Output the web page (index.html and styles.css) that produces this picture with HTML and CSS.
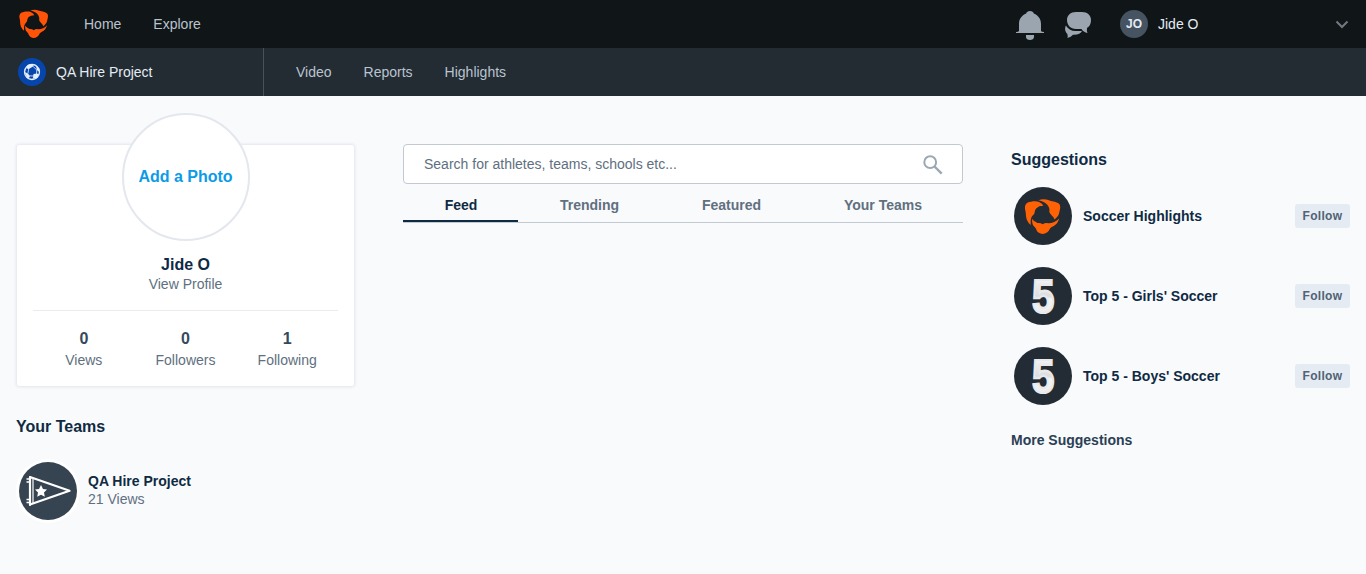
FILE: index.html
```html
<!DOCTYPE html>
<html lang="en">
<head>
<meta charset="utf-8">
<title>Home</title>
<link rel="stylesheet" href="styles.css">
</head>
<body>
<svg class="defs" width="0" height="0" aria-hidden="true">
  <defs>
    <linearGradient id="silver" x1="0" y1="0" x2="0" y2="1"><stop offset="0" stop-color="#fff"/><stop offset=".5" stop-color="#dcdde0"/><stop offset=".55" stop-color="#f4f4f5"/><stop offset="1" stop-color="#e8e8ea"/></linearGradient>
    <symbol id="logo" viewBox="74 175 112 110">
      <path d="M118 185C108 181 92 184 84 187C76 191 74 200 76 209C79 218 77 228 81 239Q85 249 93 255C92 241 93 231 100 225C107 220 103 211 110 204Q117 197 131 197Q129 190 118 185Z"/>
      <path d="M116 180Q132 174 150 181C160 185 172 184 180 192C185 201 180 211 179 219C177 228 172 232 165 238C162 229 151 223 149 215C153 200 140 185 116 180Z"/>
      <path d="M97 236C101 244 107 244 113 249Q123 248 129 253Q138 247 146 250C159 250 170 244 179 235C174 250 168 256 158 260C149 264 151 271 142 278Q129 287 116 278C109 272 111 266 104 260C97 255 97 246 97 236Z"/>
    </symbol>
  </defs>
</svg>
<header class="topbar">
  <svg class="brand" fill="#ff5308"><use href="#logo"/></svg>
  <nav class="links"><a>Home</a><a>Explore</a></nav>
  <div class="user">
    <svg class="bell" viewBox="0 0 28 30" fill="#9ba5b0"><path d="M14 0C16 0 17.500 1.200 17.800 2.500C22.500 4.500 25 8 25 13V20Q25.500 21 28 21V22H0V21Q2.500 21 3 20V13C3 8 5.500 4.500 10.200 2.500C10.500 1.200 12 0 14 0ZM10 24H18V26C18 27.800 16.200 29 14 29S10 27.800 10 26Z"/></svg>
    <svg class="chat" viewBox="0 0 26 26" fill="#9ba5b0"><path d="M11 0H17C22.500 0 26 3.500 26 8C26 12 24.500 14.500 22 16Q21.500 18.500 22.500 21C20 20.500 17.500 19 16.500 17H11C5.500 17 2 13 2 8C2 3.500 5.500 0 11 0Z"/><path d="M.8 13.500C3 17 6 19 10.500 19H17C16 21.500 13 23 8 22.800Q6 25 2.500 26Q3 24 2.300 22C0 20 -.5 16.500 .8 13.500Z"/></svg>
    <span class="initials">JO</span>
    <span class="username">Jide O</span>
    <svg class="caret" viewBox="0 0 14 9"><path d="M1.500 1.500L7 7L12.500 1.500" fill="none" stroke="#707881" stroke-width="2"/></svg>
  </div>
</header>
<div class="subbar">
  <div class="team">
    <svg class="ball" viewBox="0 0 28 28"><circle cx="14" cy="14" r="14" fill="#0646ac"/><circle cx="14" cy="14" r="7.500" fill="none" stroke="#e4edfa" stroke-width="1.300"/><g fill="#e4edfa"><path d="M9.500 7L15.500 6L15 8.500L10.800 11L8.500 10.500Z"/><path d="M18 7.500L21.200 10.500L21.500 14L18.800 12Z"/><path d="M15.500 16L19 15.500L21.200 16.500L18.500 20.500L15 20Z"/><path d="M6.500 14L10.200 15.500L12 19L9.500 20.500Z"/></g><path d="M10.800 10L10 15M14.800 8.200L18.800 12L18.500 16M11 17.800L16 18M14.500 21.500L15.800 19.500" fill="none" stroke="#e4edfa" stroke-width=".8"/></svg>
    <span>QA Hire Project</span>
  </div>
  <nav class="links"><a>Video</a><a>Reports</a><a>Highlights</a></nav>
</div>
<main class="page">
  <aside class="left">
    <section class="card">
      <div class="photo">Add a Photo</div>
      <h2 class="name">Jide O</h2>
      <a class="view">View Profile</a>
      <div class="stats">
        <div><b>0</b><span>Views</span></div>
        <div><b>0</b><span>Followers</span></div>
        <div><b>1</b><span>Following</span></div>
      </div>
    </section>
    <h3 class="heading teams-title">Your Teams</h3>
    <div class="team-row">
      <svg class="pennant" viewBox="0 0 64 64"><circle cx="32" cy="32" r="32" fill="#fff"/><circle cx="32" cy="32" r="29" fill="#364350"/><path d="M14 18L53.500 31.800L14 45.500Z" fill="none" stroke="#fff" stroke-width="2.200" stroke-linejoin="round"/><path d="M10.500 20H14M10.500 23H14M10.500 40.500H14M10.500 43.500H14M14 17V47" stroke="#fff" stroke-width="1.500"/><path d="M17 20V44" stroke="#fff" stroke-width="1.200"/><path fill="#fff" d="M25 26L27 30L31 30.500L28 33.500L28.800 37.700L25 35.700L21.200 37.700L22 33.500L19 30.500L23 30Z"/></svg>
      <div><b>QA Hire Project</b><span>21 Views</span></div>
    </div>
  </aside>
  <section class="center">
    <div class="search">
      <span>Search for athletes, teams, schools etc...</span>
      <svg class="lens" viewBox="0 0 20 20"><circle cx="7.200" cy="7.200" r="5.900" fill="none" stroke="#9ba7b3" stroke-width="2"/><path d="M11.500 11.500L18.700 18.700" stroke="#9ba7b3" stroke-width="2.400"/></svg>
    </div>
    <nav class="tabs"><a class="tab active">Feed</a><a class="tab trending">Trending</a><a class="tab featured">Featured</a><a class="tab yours">Your Teams</a></nav>
  </section>
  <aside class="right">
    <h3 class="heading">Suggestions</h3>
    <div class="suggestion">
      <svg class="avatar" viewBox="0 0 58 58"><circle cx="29" cy="29" r="29" fill="#232b34"/><use href="#logo" x="10.500" y="11.500" width="37" height="36.500" fill="#ff6205"/></svg>
      <b>Soccer Highlights</b><button>Follow</button>
    </div>
    <div class="suggestion">
      <svg class="avatar" viewBox="0 0 58 58"><circle cx="29" cy="29" r="29" fill="#232b34"/><text class="five" transform="translate(29.300 46) scale(.84 1)" text-anchor="middle" fill="url(#silver)">5</text></svg>
      <b>Top 5 - Girls' Soccer</b><button>Follow</button>
    </div>
    <div class="suggestion">
      <svg class="avatar" viewBox="0 0 58 58"><circle cx="29" cy="29" r="29" fill="#232b34"/><text class="five" transform="translate(29.300 46) scale(.84 1)" text-anchor="middle" fill="url(#silver)">5</text></svg>
      <b>Top 5 - Boys' Soccer</b><button>Follow</button>
    </div>
    <a class="more">More Suggestions</a>
  </aside>
</main>
</body>
</html>
```
FILE: styles.css
```css
* { box-sizing: border-box; }
body { margin: 0; height: 574px; background: #f9fafc; color: #0f2a43; font: 14px/20px "Liberation Sans", Arial, sans-serif; overflow: hidden; }
.defs { display: block; position: absolute; }
svg { display: block; flex: none; }
h2, h3 { margin: 0; font-size: 16px; line-height: 24px; }
.topbar { height: 48px; background: #101517; display: flex; align-items: center; padding: 0 17px 0 19px; color: #b9c4cf; }
.brand { width: 30px; height: 30px; }
.links { display: flex; gap: 32px; color: #b9c4cf; }
.topbar .links { margin-left: 35px; }
.user { margin-left: auto; width: 333px; display: flex; align-items: center; color: #e4ecf4; }
.bell { width: 28px; height: 30px; margin: 3px 21px 0 0; }
.chat { width: 26px; height: 26px; margin-top: 2px; }
.initials { width: 28px; height: 28px; margin: 0 10px 0 29px; border-radius: 50%; background: #465360; text-align: center; font: bold 12px/28px "Liberation Sans", sans-serif; }
.caret { width: 14px; height: 9px; margin-left: auto; }
.subbar { height: 48px; background: #232b33; display: flex; align-items: center; }
.team { width: 264px; height: 48px; padding-left: 18px; border-right: 1px solid #46515c; display: flex; align-items: center; gap: 10px; color: #e4ecf4; }
.ball { width: 28px; height: 28px; }
.subbar .links { margin-left: 32px; }
.page { display: grid; grid-template-columns: 339px 560px 339px; column-gap: 48px; padding: 48px 16px 0; }
.card { height: 241px; margin: 1px 1px 0; background: #fff; border-radius: 2px; box-shadow: 0 0 3px 1px #e1e6eb; padding: 0 16px; text-align: center; display: flex; flex-direction: column; align-items: center; }
.photo { width: 128px; height: 128px; flex: none; margin-top: -32px; border: 2px solid #e4e7ed; border-radius: 50%; background: #fff; color: #0c9be6; font: bold 16px/124px "Liberation Sans", sans-serif; }
.name { margin-top: 12px; }
.view { line-height: 16px; margin-top: -1px; color: #607080; }
.stats { margin-top: 18px; border-top: 1px solid #eaecee; width: 305px; display: grid; grid-template-columns: repeat(3, 1fr); padding-top: 18px; }
.stats b, .stats span { display: block; }
.stats b { font-size: 16px; color: #35495d; }
.stats span { margin-top: 1px; color: #607080; }
.teams-title { margin-top: 29px; }
.team-row { display: flex; align-items: center; margin-top: 20px; gap: 8px; }
.pennant { width: 64px; height: 64px; }
.team-row div { margin-top: -2px; }
.team-row b, .team-row span { display: block; line-height: 18px; }
.team-row span { color: #607080; }
.search { height: 40px; border: 1px solid #c3c9d0; border-radius: 4px; background: #fff; padding: 0 19px 0 20px; display: flex; align-items: center; justify-content: space-between; color: #607080; }
.lens { width: 20px; height: 20px; margin-top: 2px; }
.tabs { height: 39px; border-bottom: 1px solid #c3c9d0; display: flex; }
.tab { height: 38px; padding-left: 1px; text-align: center; font-weight: bold; line-height: 42px; color: #607080; width: 142px; }
.active { width: 115px; color: #0f2a43; border-bottom: 2px solid #0f2a43; }
.yours { width: 161px; }
.right { padding-top: 4px; }
.suggestion { height: 58px; margin: 0 0 22px; padding-left: 3px; display: flex; align-items: center; }
.right .heading { margin-bottom: 15px; }
.avatar { width: 58px; height: 58px; margin-right: 11px; }
.five { font: bold 48px "Liberation Sans", sans-serif; stroke: #e8e9eb; stroke-width: 2.2px; }
button { margin-left: auto; width: 55px; height: 24px; border: 0; border-radius: 3px; background: #e5ebf2; color: #506274; font: bold 12px/24px "Liberation Sans", sans-serif; letter-spacing: .3px; padding: 0; }
.more { font-weight: bold; color: #2a4055; display: block; margin-top: 25px; }
```
